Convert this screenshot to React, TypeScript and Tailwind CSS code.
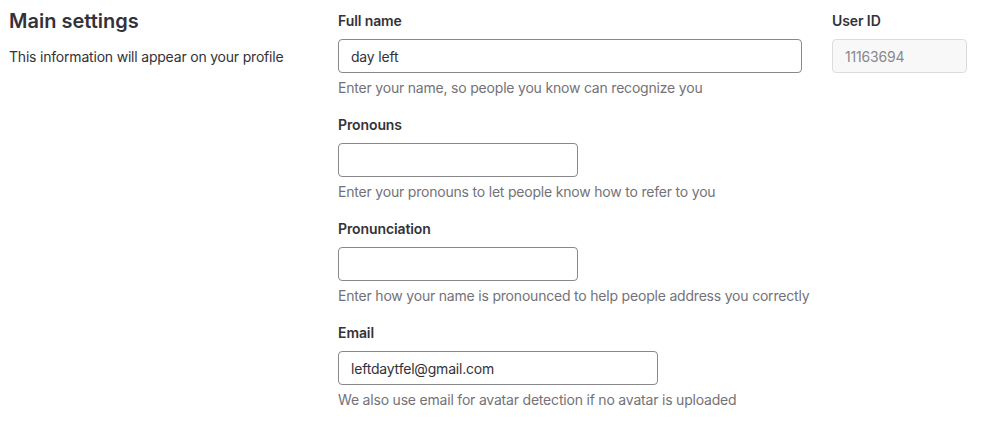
import React from 'react';

const font = { fontFamily: 'Inter, "Noto Sans", sans-serif' };

interface FieldProps {
  label: string;
  help: string;
  value?: string;
  width: string;
}

const Field: React.FC<FieldProps> = ({ label, help, value, width }) => (
  <div className="mb-[17px]">
    <label className="block text-sm leading-5 font-semibold text-[#333238] mb-2 tracking-[-0.1px]">{label}</label>
    <input
      readOnly
      value={value ?? ''}
      className={`${width} h-[34px] px-3 text-sm tracking-[-0.2px] text-[#333238] bg-white border border-[#89888d] rounded outline-none`}
    />
    <p className="mt-[5px] text-sm leading-5 tracking-[-0.2px] text-[#737278]">{help}</p>
  </div>
);

export default function App() {
  return (
    <div className="w-[983px] h-[422px] bg-white flex" style={font}>
      {/* Left intro */}
      <div className="w-[329px] shrink-0 pl-[9px] pt-[9px]">
        <h4 className="text-[20px] leading-6 font-semibold text-[#333238]">Main settings</h4>
        <p className="mt-[14px] text-sm leading-5 tracking-[-0.2px] text-[#333238]">
          This information will appear on your profile
        </p>
      </div>

      {/* Form */}
      <div className="flex-1 pl-[9px] pt-[11px]">
        <div className="flex gap-[30px]">
          <Field
            label="Full name"
            value="day left"
            width="w-[464px]"
            help="Enter your name, so people you know can recognize you"
          />
          <div>
            <label className="block text-sm leading-5 font-semibold text-[#333238] mb-2 tracking-[-0.1px]">User ID</label>
            <input
              readOnly
              value="11163694"
              className="w-[135px] h-[34px] px-3 text-sm tracking-[-0.2px] text-[#89888d] bg-[#f8f8f8] border border-[#dcdcde] rounded outline-none"
            />
          </div>
        </div>
        <Field
          label="Pronouns"
          width="w-[240px]"
          help="Enter your pronouns to let people know how to refer to you"
        />
        <Field
          label="Pronunciation"
          width="w-[240px]"
          help="Enter how your name is pronounced to help people address you correctly"
        />
        <Field
          label="Email"
          value="leftdaytfel@gmail.com"
          width="w-[320px]"
          help="We also use email for avatar detection if no avatar is uploaded"
        />
      </div>
    </div>
  );
}
